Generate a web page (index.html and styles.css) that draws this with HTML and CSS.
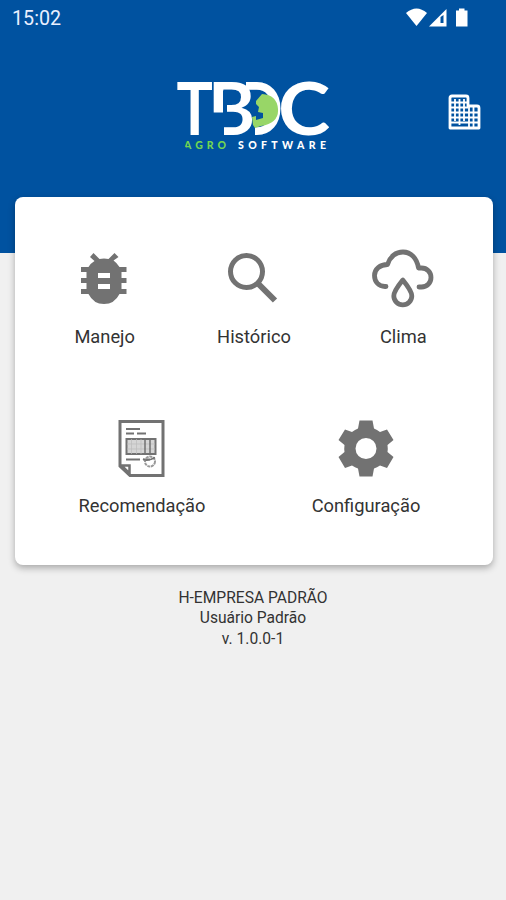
FILE: index.html
```html
<!DOCTYPE html>
<html lang="pt-BR">

<head>
    <meta charset="UTF-8">
    <meta name="viewport" content="width=device-width, initial-scale=1.0">
    <title>TBDC Agro Software</title>
    <link rel="stylesheet" href="styles.css">
</head>

<body>
    <header class="header">
        <div class="status-bar">
            <span class="clock">15:02</span>
            <svg class="status-icons" width="66" height="22" viewBox="0 0 66 22" fill="#fff">
                <path d="M1 5Q11.500 -4 22 5L11.500 18Z"/>
                <path fill-rule="evenodd" d="M24 18.500 41.500 1V18.500ZM35.500 9V15H38.500V7Z"/>
                <path d="M51 2.500H54V.5H59.500V2.500H62.500V18.500H51Z"/>
            </svg>
        </div>
        <div class="brand-row">
            <svg class="logo" width="180" height="90" viewBox="0 0 180 90">
                <g class="logo-name">
                    <text transform="translate(11.500 65) scale(.83 1)">T</text>
                    <text transform="translate(69 65) scale(.88 1)">D</text>
                    <rect class="cut" x="72" y="21" width="18" height="45"/>
                    <rect class="cut" x="72" y="10" width="9" height="20"/>
                    <text transform="translate(43 65) scale(.98 1)">B</text>
                    <rect class="cut" x="48" y="42.500" width="11" height="23"/>
                    <rect class="cut" x="58" y="20.500" width="4" height="36.500"/>
                    <text transform="translate(113 65) scale(1.080 1)">C</text>
                </g>
                <path class="globe" d="M91 31 97 24Q112 25 113 39T96 56L90 58 88 55 87 47 91 46 91 50 98 48V43L93 42 94 37 91 34Z"/>
                <g class="logo-tagline">
                    <text class="agro" x="19" y="79" textLength="42">AGRO</text>
                    <path class="cut" d="M18 74 23 80H18Z"/>
                    <text x="73" y="79" textLength="88">SOFTWARE</text>
                </g>
            </svg>
            <svg class="company" width="34" height="36" viewBox="0 0 34 36">
                <path d="M2 34V4Q2 2 4 2H18Q20 2 20 4V12H29Q31 12 31 14V34Z" fill="none" stroke="#fff" stroke-width="2.800" stroke-linejoin="round"/>
                <path d="M7 5V27M11.500 5V31M16 5V27M3 8.500H20M3 13.500H20M3 18.500H31M3 23.500H31M3 28.500H31M21 13V33M25.500 13V33" stroke="#fff" stroke-width="1.800"/>
            </svg>
        </div>
    </header>

    <main class="menu-card">
        <div class="menu-row">
            <a class="menu-item">
                <svg width="64" height="64" viewBox="0 0 64 64" fill="#727272">
                    <path fill-rule="evenodd" d="M53.500 20H46.500Q44 16 40.500 13.500L45.500 10 41.500 6 35.500 12Q31 11 26.500 12L20.500 6 17 10 21.500 14Q18 16 15.500 20H8V25H13.500V31H8V36H13.500V42H8V47H15.500Q20.500 57 31 57T46.500 47H53.500V42H48.500V36H53.500V31H48.500V25H53.500ZM25 26H37V31H25ZM25 37H37V42H25Z"/>
                </svg>
                <span>Manejo</span>
            </a>
            <a class="menu-item">
                <svg width="64" height="64" viewBox="0 0 64 64" fill="none" stroke="#727272">
                    <circle cx="24.500" cy="24.500" r="16" stroke-width="5"/>
                    <path d="M36.500 37 53 53.500" stroke-width="6"/>
                </svg>
                <span>Histórico</span>
            </a>
            <a class="menu-item">
                <svg width="64" height="64" viewBox="0 0 64 64" fill="none" stroke="#727272" stroke-width="4.800" stroke-linecap="round" stroke-linejoin="round">
                    <path d="M15 39.500H14C7.500 39.500 3.500 34.500 3.500 28.500C3.500 22 9 17.500 16.500 17.500C19 9.500 25 5 32 5C40 5 46 11.500 47.500 21H50.500C56 21 60 25 60 30.500C60 36 56 40 50.500 40H48"/>
                    <path d="M31.800 33Q22.800 44 22.800 49A9 8.800 0 0 0 40.800 49Q40.800 44 31.800 33Z"/>
                </svg>
                <span>Clima</span>
            </a>
        </div>
        <div class="menu-row">
            <a class="menu-item">
                <svg width="64" height="64" viewBox="0 0 64 64" fill="none" stroke="#727272">
                    <path d="M10 5.500H53V59.500H20L10 50Z" stroke-width="3"/>
                    <path d="M10 49.500H19.500V59.500M12 50 19 57" stroke-width="2.500"/>
                    <path d="M16 13H30M16 17.500H24M27 17.500H36M16 43.500H30M33 43.500H40" stroke-width="1.800"/>
                    <rect x="16.500" y="23" width="29" height="15" fill="#d5d5d5" stroke-width="2"/>
                    <path d="M17 28H45M17 33H45M21.500 23V38M26.500 23V38M31 23V38" stroke="#bbb" stroke-width=".7"/>
                    <path d="M35 23V38M40 23V38" stroke-width="1.500"/>
                    <circle cx="40" cy="45.500" r="5" stroke="#999" stroke-width="2" stroke-dasharray="3 .7"/>
                    <path d="M33 43Q37 46 45 41.500" stroke-width="1.500"/>
                </svg>
                <span>Recomendação</span>
            </a>
            <a class="menu-item">
                <svg width="64" height="64" viewBox="0 0 64 64" fill="#727272">
                    <path fill-rule="evenodd" d="M25.500 4.500H38.500L40 12.500Q43 13.500 46 16L53 13.500 59.500 24 53.500 29Q54 32.500 53.500 36L59.500 41 53 52 46 49.500Q43 51.500 40 52.500L38.500 60.500H25.500L24 52.500Q21 51.500 18 49.500L11 52 4.500 41 10.500 36Q10 32.500 10.500 29L4.500 24 11 13.500 18 16Q21 13.500 24 12.500ZM32 22A10.500 10.500 0 1 0 32 43A10.500 10.500 0 1 0 32 22Z"/>
                </svg>
                <span>Configuração</span>
            </a>
        </div>
    </main>

    <footer class="account">
        <p>H-EMPRESA PADRÃO</p>
        <p>Usuário Padrão</p>
        <p>v. 1.0.0-1</p>
    </footer>
</body>

</html>
```

FILE: styles.css
```css
* {
    margin: 0;
    padding: 0;
    box-sizing: border-box;
}

body {
    font-family: Roboto, sans-serif;
    background-color: #f0f0f0;
    color: #333;
    min-height: 100vh;
}

.header {
    height: 253px;
    background-color: #0052a0;
}

.status-bar {
    display: flex;
    justify-content: space-between;
    height: 36px;
    padding: 8px 35px 0 12px;
}

.clock {
    color: #e9f0ff;
    font-size: 19.700px;
    line-height: 21px;
}

.brand-row {
    display: grid;
    grid-template-columns: 1fr 180px 1fr;
    padding: 34px 24px 0 28px;
}

.logo {
    grid-column: 2;
}

.company {
    justify-self: end;
    margin-top: 24px;
}

.logo-name {
    fill: #fff;
    font-family: Lato, sans-serif;
    font-size: 73px;
    font-weight: 700;
}

.logo-tagline {
    fill: #fff;
    font-family: Lato, sans-serif;
    font-size: 10.500px;
    font-weight: 900;
}

.logo .cut {
    fill: #0052a0;
}

.globe {
    fill: #98d667;
}

.logo-tagline .agro {
    fill: #70d552;
}

.menu-card {
    width: 478px;
    height: 368px;
    margin: -56px auto 0 15px;
    padding: 50px 15px 0;
    background-color: #fff;
    border-radius: 8px;
    box-shadow: 0 3px 7px rgba(0, 0, 0, 0.3);
}

.menu-row {
    display: flex;
    height: 169px;
}

.menu-item {
    flex: 1;
    display: flex;
    flex-direction: column;
    align-items: center;
    gap: 14px;
    font-size: 18.300px;
    line-height: 22px;
}

.menu-item span {
    padding-top: 0.5px;
}

.account {
    margin-top: 22.500px;
    text-align: center;
    font-size: 15.600px;
    line-height: 20.700px;
}
```
